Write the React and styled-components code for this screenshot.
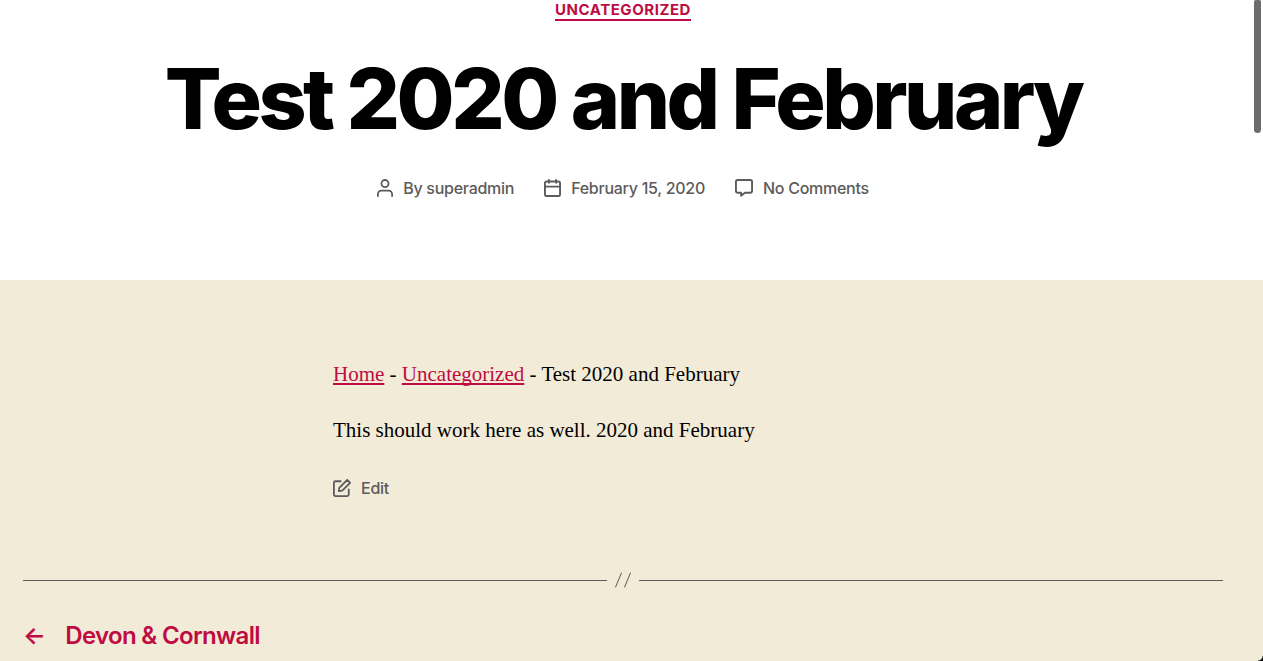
import React from "react";
import styled, { createGlobalStyle, css } from "styled-components";

const accent = "#be0c42";
const muted = "#5b5b5b";
const sans = `Inter, "Liberation Sans", sans-serif`;

const GlobalStyle = createGlobalStyle`
  *, *::before, *::after { box-sizing: border-box; }
  html, body { margin: 0; height: 100%; }
  body { overflow: hidden; background: #fff; color: #000; font-family: ${sans}; }
`;

const Header = styled.header`
  display: flex;
  flex-direction: column;
  align-items: center;
  padding: 0 17px 80px 0;
  text-align: center;
`;

const Category = styled.a`
  height: 21px;
  border-bottom: 2px solid ${accent};
  color: ${accent};
  font-size: 15px;
  font-weight: 700;
  line-height: 19px;
  letter-spacing: 0.0366667em;
  text-decoration: none;
  text-transform: uppercase;
`;

const Title = styled.h1`
  margin: 30px 0 0;
  font-size: 84px;
  font-weight: 800;
  line-height: 96px;
  letter-spacing: -0.0415625em;
`;

const MetaList = styled.ul`
  display: flex;
  flex-wrap: wrap;
  justify-content: center;
  gap: 8px 30px;
  margin: 29px 0 0;
  padding: 0;
  list-style: none;
`;

const metaText = css`
  display: flex;
  align-items: center;
  gap: 10px;
  color: ${muted};
  font-family: ${sans};
  font-size: 16px;
  font-weight: 500;
  line-height: 24px;
  letter-spacing: -0.016875em;
`;

const MetaItem = styled.li`
  ${metaText}
`;

const MetaLink = styled.a`
  color: inherit;
  text-decoration: none;
`;

const Icon = styled.svg`
  display: block;
  flex: none;
  fill: none;
  stroke: currentColor;
  stroke-width: 2;
  stroke-linecap: round;
  stroke-linejoin: round;
`;

const Body = styled.main`
  min-height: calc(100vh - 280px);
  padding: 79px 40px 0 23px;
  background: #f2ebd8;
`;

const Content = styled.div`
  max-width: 580px;
  margin: 0 auto;
  font-family: "Liberation Serif", serif;
  font-size: 21px;
  line-height: 30px;
`;

const Paragraph = styled.p`
  margin: 0 0 26px;
`;

const TextLink = styled.a`
  color: ${accent};
  text-decoration: underline;
  text-decoration-thickness: 2px;
  text-decoration-skip-ink: none;
  text-underline-offset: 2px;
`;

const EditLink = styled.a`
  ${metaText}
  width: max-content;
  margin-top: 31px;
  text-decoration: none;
`;

const Navigation = styled.nav`
  max-width: 1200px;
  margin: 72px auto 0;
`;

const Separator = styled.div`
  display: flex;
  align-items: center;
  height: 16px;
  color: ${muted};
`;

const Line = styled.span`
  flex: 1;
  height: 1px;
  background: currentColor;
`;

const Slashes = styled.span`
  display: flex;
  justify-content: center;
  gap: 8px;
  width: 32px;

  &::before,
  &::after {
    content: "";
    width: 1px;
    height: 16px;
    background: currentColor;
    transform: rotate(22.5deg);
  }
`;

const PreviousPost = styled.a`
  display: flex;
  gap: 20px;
  width: max-content;
  margin-top: 32px;
  color: ${accent};
  font-size: 24px;
  font-weight: 600;
  line-height: 32px;
  letter-spacing: -0.0275em;
  text-decoration: none;
`;

const ScrollThumb = styled.div`
  position: fixed;
  top: 0;
  right: 2px;
  width: 7px;
  height: 133px;
  border-radius: 2px 2px 4px 4px;
  background: #6c6c6c;
`;

const WindowCorner = styled.div`
  position: fixed;
  right: 0;
  bottom: 0;
  width: 5px;
  height: 5px;
  background: radial-gradient(circle at 0 0, transparent 4px, #111 5px);
`;

const UserIcon = () => (
  <Icon width="16" height="18" viewBox="0 0 18 20" aria-hidden="true">
    <circle cx="9" cy="5" r="4" />
    <path d="M1 19v-2a4 4 0 0 1 4-4h8a4 4 0 0 1 4 4v2" />
  </Icon>
);

const CalendarIcon = () => (
  <Icon width="17" height="18" viewBox="0 0 18 19" aria-hidden="true">
    <rect x="1" y="2.6" width="16" height="15.4" rx="2" />
    <path d="M5.2 1v3M12.8 1v3M1 8h16" />
  </Icon>
);

const CommentIcon = () => (
  <Icon width="18" height="18" viewBox="0 0 19 19" aria-hidden="true">
    <path d="M3 1h13a2 2 0 0 1 2 2v9.5a2 2 0 0 1-2 2h-5.5L6.5 17.6v-3.1H3a2 2 0 0 1-2-2V3a2 2 0 0 1 2-2z" />
  </Icon>
);

const EditIcon = () => (
  <Icon width="18" height="18" viewBox="0 0 20 20" aria-hidden="true">
    <path d="M8.5 2.5H2.7A1.7 1.7 0 0 0 1 4.2v13.1A1.7 1.7 0 0 0 2.7 19h13.1a1.7 1.700 0 0 0 1.7-1.7v-5.8" />
    <path d="M15.8 1 19 4.2 10.3 13 6.500 13.500 7 9.800z" />
  </Icon>
);

export default function App() {
  return (
    <>
      <GlobalStyle />
      <Header>
        <Category href="#uncategorized">Uncategorized</Category>
        <Title>Test 2020 and February</Title>
        <MetaList>
          <MetaItem>
            <UserIcon />
            <span>
              By <MetaLink href="#author">superadmin</MetaLink>
            </span>
          </MetaItem>
          <MetaItem>
            <CalendarIcon />
            <MetaLink href="#date">February 15, 2020</MetaLink>
          </MetaItem>
          <MetaItem>
            <CommentIcon />
            <MetaLink href="#comments">No Comments</MetaLink>
          </MetaItem>
        </MetaList>
      </Header>
      <Body>
        <Content>
          <Paragraph>
            <TextLink href="#home">Home</TextLink> -{" "}
            <TextLink href="#uncategorized">Uncategorized</TextLink> - Test 2020 and February
          </Paragraph>
          <Paragraph>This should work here as well. 2020 and February</Paragraph>
          <EditLink href="#edit">
            <EditIcon />
            Edit
          </EditLink>
        </Content>
        <Navigation aria-label="Post">
          <Separator aria-hidden="true">
            <Line />
            <Slashes />
            <Line />
          </Separator>
          <PreviousPost href="#previous">
            <span aria-hidden="true">←</span>
            <span>Devon &amp; Cornwall</span>
          </PreviousPost>
        </Navigation>
      </Body>
      <ScrollThumb aria-hidden="true" />
      <WindowCorner aria-hidden="true" />
    </>
  );
}
